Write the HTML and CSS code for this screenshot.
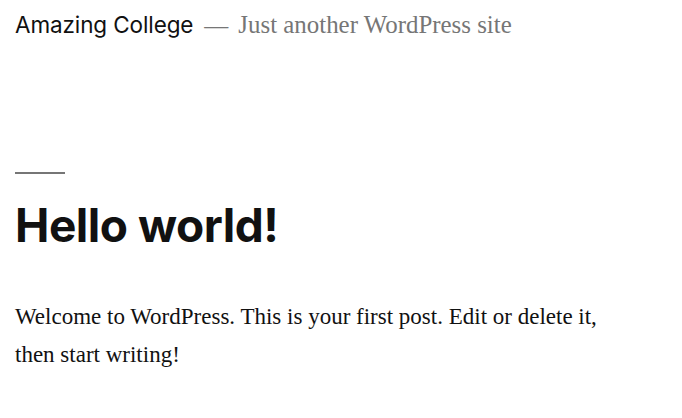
FILE: index.html
```html
<!DOCTYPE html>
<html lang="en">
<head>
<meta charset="utf-8">
<title>Amazing College</title>
<link rel="stylesheet" href="styles.css">
</head>
<body>
<header class="site-header">
  <p class="site-branding"><span class="site-title">Amazing College</span><span class="sep">—</span><span class="site-description">Just another WordPress site</span></p>
</header>
<main class="site-main">
  <article class="post">
    <header class="entry-header">
      <hr class="entry-rule">
      <h1 class="entry-title">Hello world!</h1>
    </header>
    <div class="entry-content">
      <p>Welcome to WordPress. This is your first post. Edit or delete it, then start writing!</p>
    </div>
  </article>
</main>
</body>
</html>
```
FILE: styles.css
```css
html, body {
  margin: 0;
  padding: 0;
  background: #fff;
}
body {
  padding: 0 15px;
  color: #111;
}
.site-header {
  padding-top: 11px;
}
.site-branding {
  margin: 0;
  height: 30px;
  display: flex;
  align-items: baseline;
  white-space: nowrap;
}
.site-title {
  font-family: Inter, "Noto Sans", sans-serif;
  font-size: 22.5px;
  font-weight: 400;
  color: #111;
  letter-spacing: -0.005em;
}
.sep {
  font-family: "Liberation Serif", serif;
  font-size: 24px;
  color: #767676;
  margin: 0 10px 0 11px;
}
.site-description {
  font-family: "Liberation Serif", serif;
  font-size: 24.9px;
  color: #767676;
}
.site-main {
  padding-top: 131px;
}
.entry-rule {
  border: 0;
  margin: 0;
  width: 50px;
  height: 2px;
  background: #767676;
}
.entry-title {
  margin: 24px 0 0;
  font-family: Inter, "Noto Sans", sans-serif;
  font-size: 46px;
  font-weight: 700;
  letter-spacing: -0.01em;
  line-height: 1.2;
  color: #111;
}
.entry-content p {
  margin: 45px 0 0;
  max-width: 600px;
  font-family: "Liberation Serif", serif;
  font-size: 23px;
  line-height: 38px;
  color: #111;
}
```
